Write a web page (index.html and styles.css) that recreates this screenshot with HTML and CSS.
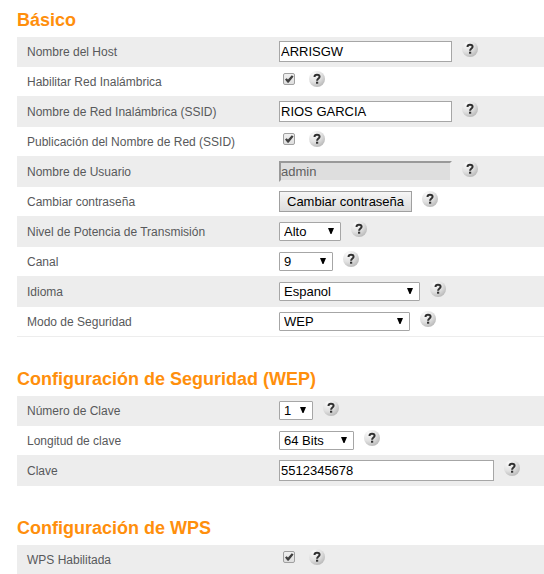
FILE: index.html
```html
<!DOCTYPE html>
<html lang="es">
<head>
<meta charset="utf-8">
<meta name="viewport" content="width=device-width, initial-scale=1">
<title>Configuración inalámbrica</title>
<link rel="stylesheet" href="styles.css">
</head>
<body>
<svg class="defs" aria-hidden="true">
  <defs>
    <radialGradient id="ball" cx="0.3" cy="0.2" r="0.9">
      <stop offset="0" stop-color="#fafafa"/>
      <stop offset="0.55" stop-color="#e0e0e0"/>
      <stop offset="1" stop-color="#b4b4b4"/>
    </radialGradient>
    <symbol id="help" viewBox="0 0 16 16">
      <circle cx="8" cy="8" r="8" fill="url(#ball)"/>
      <path d="M5.500 5.900C5.500 4.300 6.500 3.700 8 3.700s2.600.7 2.600 2.100c0 1.800-2.500 1.700-2.500 3.900" fill="none" stroke="#303030" stroke-width="2"/>
      <rect x="7" y="10.700" width="2.200" height="2" fill="#303030"/>
    </symbol>
    <symbol id="arrow" viewBox="0 0 6 6">
      <path d="M0 0h6L3.500 6h-1z" fill="#000"/>
    </symbol>
  </defs>
</svg>
<main class="page">
  <section class="group">
    <h2 class="title">Básico</h2>
    <div class="row">
      <label class="name" for="host">Nombre del Host</label>
      <div class="field"><input class="text" id="host" type="text" value="ARRISGW"><svg class="help"><use href="#help"/></svg></div>
    </div>
    <div class="row">
      <label class="name" for="wifi">Habilitar Red Inalámbrica</label>
      <div class="field"><input class="check" id="wifi" type="checkbox" checked><svg class="help"><use href="#help"/></svg></div>
    </div>
    <div class="row">
      <label class="name" for="ssid">Nombre de Red Inalámbrica (SSID)</label>
      <div class="field"><input class="text" id="ssid" type="text" value="RIOS GARCIA"><svg class="help"><use href="#help"/></svg></div>
    </div>
    <div class="row">
      <label class="name" for="broadcast">Publicación del Nombre de Red (SSID)</label>
      <div class="field"><input class="check" id="broadcast" type="checkbox" checked><svg class="help"><use href="#help"/></svg></div>
    </div>
    <div class="row">
      <label class="name" for="user">Nombre de Usuario</label>
      <div class="field"><input class="text" id="user" type="text" value="admin" disabled><svg class="help"><use href="#help"/></svg></div>
    </div>
    <div class="row">
      <label class="name" for="password">Cambiar contraseña</label>
      <div class="field"><button class="button" id="password" type="button">Cambiar contraseña</button><svg class="help"><use href="#help"/></svg></div>
    </div>
    <div class="row">
      <label class="name" for="power">Nivel de Potencia de Transmisión</label>
      <div class="field"><span class="picker picker-power"><select class="select" id="power"><option>Alto</option></select><svg class="arrow"><use href="#arrow"/></svg></span><svg class="help"><use href="#help"/></svg></div>
    </div>
    <div class="row">
      <label class="name" for="channel">Canal</label>
      <div class="field"><span class="picker picker-channel"><select class="select" id="channel"><option>9</option></select><svg class="arrow"><use href="#arrow"/></svg></span><svg class="help"><use href="#help"/></svg></div>
    </div>
    <div class="row">
      <label class="name" for="language">Idioma</label>
      <div class="field"><span class="picker picker-language"><select class="select" id="language"><option>Espanol</option></select><svg class="arrow"><use href="#arrow"/></svg></span><svg class="help"><use href="#help"/></svg></div>
    </div>
    <div class="row">
      <label class="name" for="security">Modo de Seguridad</label>
      <div class="field"><span class="picker picker-security"><select class="select" id="security"><option>WEP</option></select><svg class="arrow"><use href="#arrow"/></svg></span><svg class="help"><use href="#help"/></svg></div>
    </div>
  </section>
  <section class="group">
    <h2 class="title">Configuración de Seguridad (WEP)</h2>
    <div class="row">
      <label class="name" for="keynum">Número de Clave</label>
      <div class="field"><span class="picker picker-keynum"><select class="select" id="keynum"><option>1</option></select><svg class="arrow"><use href="#arrow"/></svg></span><svg class="help"><use href="#help"/></svg></div>
    </div>
    <div class="row">
      <label class="name" for="keylen">Longitud de clave</label>
      <div class="field"><span class="picker picker-keylen"><select class="select" id="keylen"><option>64 Bits</option></select><svg class="arrow"><use href="#arrow"/></svg></span><svg class="help"><use href="#help"/></svg></div>
    </div>
    <div class="row">
      <label class="name" for="key">Clave</label>
      <div class="field"><input class="text text-long" id="key" type="text" value="5512345678"><svg class="help"><use href="#help"/></svg></div>
    </div>
  </section>
  <section class="group">
    <h2 class="title">Configuración de WPS</h2>
    <div class="row">
      <label class="name" for="wps">WPS Habilitada</label>
      <div class="field"><input class="check" id="wps" type="checkbox" checked><svg class="help"><use href="#help"/></svg></div>
    </div>
  </section>
</main>
</body>
</html>
```

FILE: styles.css
```css
* {
  box-sizing: border-box;
}

body {
  margin: 0;
  background: #fff;
  color: #58595b;
  font: 12px/16px "Liberation Sans", Arial, sans-serif;
}

.defs {
  position: absolute;
  width: 0;
  height: 0;
}

.page {
  display: flex;
  flex-direction: column;
  gap: 30px;
  padding: 8px 0 0 17px;
}

.title {
  margin: 0;
  padding-bottom: 5px;
  color: #ff8f0c;
  font-size: 18px;
  line-height: 24px;
}

.row {
  display: grid;
  grid-template-columns: 252px 1fr;
  height: 30px;
  padding: 0 10px;
  border-bottom: 1px solid #ededed;
}

.row:nth-of-type(odd) {
  background: #ededed;
}

.name {
  align-self: center;
}

.field {
  display: flex;
  align-items: flex-start;
  gap: 10px;
  padding-top: 4px;
}

.text,
.select,
.button {
  margin: 0;
  color: #000;
  font: 13px/17px "Liberation Sans", Arial, sans-serif;
}

.text {
  width: 173px;
  height: 21px;
  padding: 0 1px;
  border: 1px solid #a6a6a6;
  background: #fff;
}

.text-long {
  width: 215px;
}

.text:disabled {
  border: 2px solid #ededed;
  border-top-color: #999;
  border-left-color: #999;
  padding: 0;
  background: #dedede;
  color: #606060;
}

.button {
  height: 21px;
  padding: 0 7px;
  border: 1px solid #a0a0a0;
  background: linear-gradient(#f6f6f6, #dcdcdc);
}

.picker {
  display: grid;
  align-items: center;
  margin-top: 1px;
}

.select {
  grid-area: 1 / 1;
  width: 100%;
  height: 19px;
  padding: 0 4px;
  appearance: none;
  border: 1px solid #a6a6a6;
  border-radius: 1px;
  background: #fff;
}

.arrow {
  grid-area: 1 / 1;
  justify-self: end;
  width: 6px;
  height: 6px;
  margin: 0 7px 1px 0;
  pointer-events: none;
}

.picker-power { width: 62px; }
.picker-channel { width: 54px; }
.picker-language { width: 141px; }
.picker-security { width: 131px; }
.picker-keynum { width: 34px; }
.picker-keylen { width: 75px; }

.check {
  display: grid;
  place-items: center;
  width: 12px;
  height: 12px;
  margin: 2px 4px;
  appearance: none;
  border: 1px solid #a0a0a0;
  border-radius: 2px;
  background: linear-gradient(#f0f0f0, #dedede);
}

.check:checked::before {
  content: "";
  width: 10px;
  height: 10px;
  background: #404040;
  clip-path: polygon(10% 54%, 26% 42%, 40% 54%, 78% 12%, 96% 26%, 46% 88%, 36% 88%);
}

.help {
  flex: none;
  width: 16px;
  height: 16px;
}
```
